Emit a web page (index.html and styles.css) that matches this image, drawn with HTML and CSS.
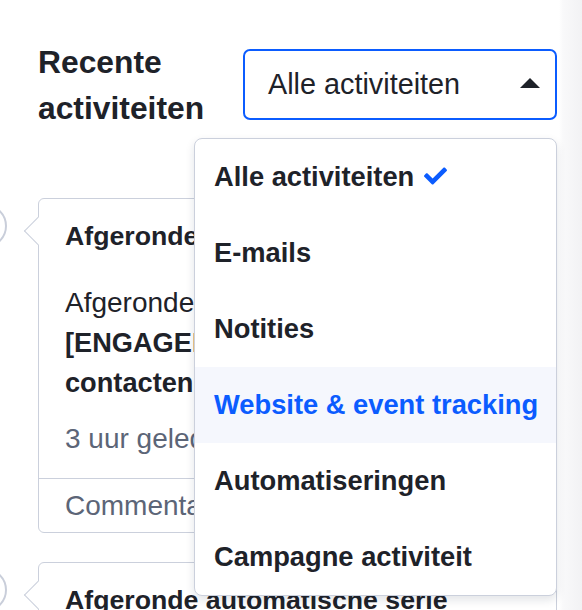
FILE: index.html
```html
<!DOCTYPE html>
<html lang="nl">
<head>
<meta charset="utf-8">
<title>Recente activiteiten</title>
<link rel="stylesheet" href="styles.css">
</head>
<body>
<div class="page">
  <header class="head">
    <h1 class="title">Recente<br>activiteiten</h1>
    <div class="filter">
      <button class="select" type="button">
        <span class="select-label">Alle activiteiten</span>
        <span class="caret"></span>
      </button>
      <ul class="menu">
        <li class="item">Alle activiteiten <svg class="check" viewBox="0 64 512 384" aria-hidden="true"><path d="M173.9 439.4l-166.4-166.4c-10-10-10-26.2 0-36.2l36.2-36.2c10-10 26.2-10 36.2 0L192 312.7 432.1 72.6c10-10 26.2-10 36.2 0l36.2 36.2c10 10 10 26.2 0 36.2l-294.4 294.4c-10 10-26.2 10-36.2 0z"/></svg></li>
        <li class="item">E-mails</li>
        <li class="item">Notities</li>
        <li class="item hover">Website &amp; event tracking</li>
        <li class="item">Automatiseringen</li>
        <li class="item">Campagne activiteit</li>
      </ul>
    </div>
  </header>

  <div class="timeline">
    <article class="card">
      <span class="dot"></span>
      <span class="pointer"></span>
      <h2 class="card-title">Afgeronde automatische serie</h2>
      <p class="card-text">Afgeronde automatische serie voor<br><b>[ENGAGEMENT] Welkomstserie</b><br><b>contacten</b> nieuwsbrief</p>
      <p class="card-time">3 uur geleden</p>
      <div class="card-foot">Commentaar toevoegen</div>
    </article>
    <article class="card">
      <span class="dot"></span>
      <span class="pointer"></span>
      <h2 class="card-title">Afgeronde automatische serie</h2>
      <p class="card-text">Afgeronde automatische serie voor<br><b>[ENGAGEMENT] Welkomstserie</b></p>
      <p class="card-time">5 uur geleden</p>
      <div class="card-foot">Commentaar toevoegen</div>
    </article>
  </div>
</div>
</body>
</html>
```

FILE: styles.css
```css
html, body {
  margin: 0;
  padding: 0;
  height: 100%;
  overflow: hidden;
}
body {
  font-family: "Liberation Sans", Arial, sans-serif;
  color: #1e2229;
  background: linear-gradient(90deg, #ffffff 0, #ffffff 559px, #f9f9fa 563px, #f2f2f4 582px);
}
.page {
  width: 519px;
  padding-left: 38px;
}
.head {
  display: flex;
  justify-content: space-between;
  align-items: flex-start;
  padding-top: 39px;
}
.title {
  margin: 0;
  font-size: 31.8px;
  line-height: 46px;
  font-weight: 700;
}
.filter {
  position: relative;
  margin-top: 10px;
}
.select {
  display: flex;
  align-items: center;
  justify-content: space-between;
  box-sizing: border-box;
  width: 314px;
  height: 71px;
  padding: 0 15px 0 23px;
  border: 2px solid #0b5cff;
  border-radius: 7px;
  background: #fff;
  font-family: inherit;
  font-size: 28.8px;
  color: #1e2229;
}
.caret {
  width: 0;
  height: 0;
  border-left: 10px solid transparent;
  border-right: 10px solid transparent;
  border-bottom: 10px solid #1e2229;
  margin-top: -3px;
}
.menu {
  position: absolute;
  top: 89px;
  right: 0;
  width: 363px;
  box-sizing: border-box;
  margin: 0;
  padding: 0;
  list-style: none;
  background: #fff;
  border: 1px solid #cbd0dc;
  border-radius: 8px;
  box-shadow: 0 4px 10px rgba(20, 30, 60, 0.12);
  overflow: hidden;
  z-index: 5;
}
.item {
  display: flex;
  align-items: center;
  gap: 10px;
  height: 76px;
  padding-left: 19px;
  font-size: 27.3px;
  font-weight: 700;
  color: #1e2229;
}
.item.hover {
  background: #f5f7fd;
  color: #0b5cff;
}
.check {
  width: 23px;
  height: 18px;
  fill: #0b5cff;
  margin-top: -2px;
}
.timeline {
  margin-top: 67px;
}
.card {
  position: relative;
  border: 1px solid #cbd0dc;
  border-radius: 6px;
  padding: 17px 26px 0;
  margin-bottom: 29px;
  background: #fff;
}
.dot {
  position: absolute;
  left: -76px;
  top: 5px;
  width: 40px;
  height: 40px;
  border: 2px solid #c9ceda;
  border-radius: 50%;
  background: #fff;
}
.pointer {
  position: absolute;
  left: -11px;
  top: 22px;
  width: 20px;
  height: 20px;
  box-sizing: border-box;
  background: #fff;
  border-left: 1px solid #cbd0dc;
  border-bottom: 1px solid #cbd0dc;
  transform: rotate(45deg);
}
.card-title {
  margin: 0;
  font-size: 26.7px;
  line-height: 40px;
  font-weight: 700;
}
.card-text {
  margin: 27px 0 0;
  font-size: 28px;
  line-height: 40px;
}
.card-text b {
  font-weight: 700;
  font-size: 27.2px;
}
.card-time {
  margin: 16px 0 19px;
  font-size: 28px;
  line-height: 40px;
  color: #5c6577;
}
.card-foot {
  margin: 0 -26px;
  padding: 7px 26px 6px;
  border-top: 1px solid #cbd0dc;
  font-size: 28px;
  line-height: 40px;
  color: #5c6577;
}
```
